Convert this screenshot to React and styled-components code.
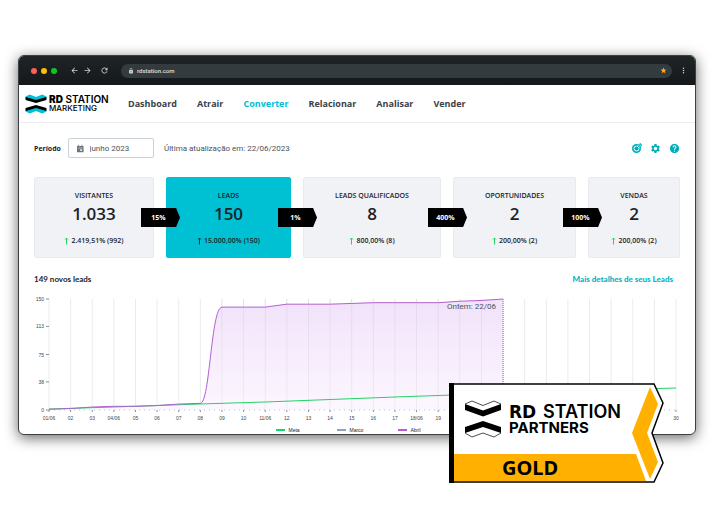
import React from "react";
import styled, { createGlobalStyle } from "styled-components";
import {
  MdArrowBack,
  MdArrowForward,
  MdHelp,
  MdLock,
  MdMoreVert,
  MdRefresh,
  MdSettings,
  MdStar,
} from "react-icons/md";

const GlobalStyle = createGlobalStyle`
  * {
    box-sizing: border-box;
  }
  body {
    margin: 0;
    background: #ffffff;
    color: #1d2228;
    font-family: "Open Sans", "Noto Sans", sans-serif;
  }
`;

const Page = styled.div`
  padding: 55px 19px 88px 18px;
`;

const Browser = styled.div`
  position: relative;
`;

const Window = styled.div`
  overflow: hidden;
  border: 1px solid #3c4042;
  border-radius: 6px;
  background: #ffffff;
  box-shadow: 0 3px 14px rgba(0, 0, 0, 0.6);
`;

const TitleBar = styled.div`
  display: flex;
  align-items: center;
  height: 29px;
  padding: 0 5px 0 12px;
  background: linear-gradient(#1f2427, #14181a);
`;

const Dots = styled.div`
  display: flex;
  gap: 4px;
  margin-right: 11px;
`;

const Dot = styled.span`
  width: 6px;
  height: 6px;
  border-radius: 50%;
  background: ${(props) => props.$color};
`;

const BarButton = styled.button`
  display: flex;
  justify-content: center;
  width: ${(props) => props.$width || 13}px;
  padding: 0;
  border: 0;
  background: none;
  color: #d5d8d9;
  font-size: 9px;
`;

const AddressBar = styled.div`
  display: flex;
  flex: 1;
  align-items: center;
  height: 14px;
  margin: 0 5px 0 7px;
  padding: 0 5px 0 7px;
  border-radius: 7px;
  background: #343b3e;
  color: #c9cccd;
  font-size: 6px;
`;

const Address = styled.input`
  flex: 1;
  min-width: 0;
  padding: 0 0 0 3px;
  border: 0;
  background: none;
  color: #dfe1e2;
  font: 500 6px "Roboto", sans-serif;
`;

const Star = styled(MdStar)`
  color: #ffab0f;
  font-size: 7px;
`;

const Header = styled.header`
  display: flex;
  align-items: center;
  height: 38px;
  padding: 0 6px;
  border-bottom: 1px solid #ececee;
`;

const Brand = styled.a`
  display: flex;
  align-items: center;
  gap: 2px;
  width: 103px;
  color: #000000;
  text-decoration: none;
`;

const BrandName = styled.span`
  font: 600 10px/9px "Inter", sans-serif;
  white-space: nowrap;
  b {
    font-weight: 900;
  }
  small {
    display: block;
    font-size: 8px;
    font-weight: 500;
    line-height: 8px;
  }
`;

const Nav = styled.nav`
  display: flex;
  gap: 20px;
`;

const NavLink = styled.a`
  color: ${(props) => (props.$active ? "#00bfd0" : "#3b4148")};
  font-size: 9px;
  font-weight: 700;
  text-decoration: none;
`;

const Content = styled.main`
  padding: 15px 15px 2px;
`;

const Filters = styled.div`
  display: flex;
  align-items: center;
  height: 20px;
  margin-bottom: 19px;
  font-size: 8px;
`;

const PeriodLabel = styled.label`
  font-size: 7px;
  font-weight: 700;
`;

const PeriodField = styled.div`
  display: flex;
  align-items: center;
  gap: 6px;
  width: 86px;
  height: 20px;
  margin: 0 10px 0 7px;
  padding: 0 7px 0 8px;
  border: 1px solid #c9d2d6;
  border-radius: 2px;
`;

const PeriodInput = styled.input`
  width: 100%;
  min-width: 0;
  padding: 0;
  border: 0;
  background: none;
  color: #4b5359;
  font: 8px "Roboto", sans-serif;
`;

const Updated = styled.span`
  color: #4b5359;
  font-family: "Roboto", sans-serif;
`;

const Tools = styled.div`
  display: flex;
  gap: 8px;
  margin-left: auto;
`;

const ToolButton = styled.button`
  display: flex;
  padding: 0;
  border: 0;
  background: none;
  color: #00adba;
  font-size: 11px;
`;

const Funnel = styled.div`
  display: grid;
  grid-template-columns: 120fr 125fr 138fr 123fr 92fr;
  gap: 12px;
`;

const Card = styled.section`
  position: relative;
  display: flex;
  flex-direction: column;
  align-items: center;
  height: 81px;
  padding-top: 13px;
  border: 1px solid ${(props) => (props.$active ? "#00c1d4" : "#e7ebee")};
  border-radius: 2px;
  background: ${(props) => (props.$active ? "#00c1d4" : "#f1f2f5")};
`;

const CardTitle = styled.h2`
  margin: 0;
  font-size: 7px;
  font-weight: 600;
  line-height: 10px;
`;

const CardValue = styled.strong`
  margin-bottom: 9px;
  font-size: 17px;
  font-weight: 600;
  line-height: 26px;
`;

const Growth = styled.span`
  display: flex;
  align-items: center;
  gap: 2px;
  font-size: 7px;
  font-weight: 600;
  line-height: 10px;
  svg {
    color: ${(props) => (props.$active ? "#14323a" : "#1fd65f")};
  }
`;

const Rate = styled.span`
  position: absolute;
  top: 30px;
  right: -27px;
  z-index: 1;
  width: 39px;
  height: 19px;
  padding-right: 4px;
  background: #000000;
  clip-path: polygon(0 0, 90% 0, 100% 50%, 90% 100%, 0 100%);
  color: #ffffff;
  font-size: 7px;
  font-weight: 700;
  line-height: 19px;
  text-align: center;
`;

const ChartHeader = styled.div`
  display: flex;
  align-items: center;
  justify-content: space-between;
  height: 14px;
  margin-top: 14px;
  padding-right: 7px;
`;

const ChartTitle = styled.h3`
  margin: 0;
  font: 700 8px "Lato", sans-serif;
`;

const DetailsLink = styled.a`
  color: #00b5c5;
  font: 900 8px "Lato", sans-serif;
  text-decoration: none;
`;

const Chart = styled.svg`
  display: block;
  width: 100%;
  margin-top: 9px;
  overflow: visible;
`;

const AxisText = styled.text`
  fill: #3f464c;
  font: 5px "Liberation Sans", sans-serif;
  text-anchor: ${(props) => props.$anchor || "middle"};
`;

const NoteText = styled.text`
  fill: #4b5359;
  font: 8px "Roboto", sans-serif;
  text-anchor: end;
`;

const Legend = styled.ul`
  display: flex;
  align-items: center;
  justify-content: center;
  height: 4px;
  margin: 5px 0 0;
  padding: 0 0 0 20px;
  overflow: hidden;
  font: 5px/4px "Liberation Sans", sans-serif;
  list-style: none;
`;

const LegendItem = styled.li`
  display: flex;
  align-items: center;
  gap: 4px;
  width: 61px;
  &::before {
    width: 9px;
    height: 2px;
    background: ${(props) => props.$color};
    content: "";
  }
`;

const Badge = styled.svg`
  position: absolute;
  right: 31px;
  bottom: -49px;
  width: 216px;
  height: 101px;
`;

const BadgeText = styled.text`
  font-family: ${(props) => props.$family || "Inter"}, sans-serif;
  font-size: ${(props) => props.$size}px;
  font-weight: ${(props) => props.$weight};
`;

const stages = [
  { title: "VISITANTES", value: "1.033", growth: "2.419,51% (992)", rate: "15%" },
  { title: "LEADS", value: "150", growth: "15.000,00% (150)", rate: "1%", active: true },
  { title: "LEADS QUALIFICADOS", value: "8", growth: "800,00% (8)", rate: "400%" },
  { title: "OPORTUNIDADES", value: "2", growth: "200,00% (2)", rate: "100%" },
  { title: "VENDAS", value: "2", growth: "200,00% (2)" },
];

const links = ["Dashboard", "Atrair", "Converter", "Relacionar", "Analisar", "Vender"];

const leads = [1, 2, 4, 5, 5, 6, 8, 9, 139, 139, 139, 143, 143, 143, 144, 145, 145, 145, 145, 147, 148, 150];

const days = Array.from({ length: 30 }, (_, i) => i + 1);

// the partner badge sits over days 20 to 29, so they get no label
const labelledDays = days.filter((day) => day < 20 || day === 30);

const xAt = (day) => 15 + ((day - 1) * 627) / 29;
const yAt = (value) => 115 - (value * 111) / 150;

// straight segments, except for the rounded jump on day 9
const leadsPath = leads
  .map((value, i) => {
    const x = xAt(i + 1);
    const y = yAt(value);
    if (i === 0) return `M${x} ${y}`;
    if (i === 8) return `C${x - 12} ${yAt(9)} ${x - 11} ${y} ${x} ${y}`;
    return `L${x} ${y}`;
  })
  .join("");

const dayLabel = (day) => {
  const text = String(day).padStart(2, "0");
  return day === 1 || (day + 3) % 7 === 0 ? `${text}/06` : text;
};

const GoalIcon = () => (
  <svg width="11" height="11" viewBox="0 0 22 22" fill="none" aria-hidden="true">
    <circle cx="11" cy="11" r="9" fill="currentColor" />
    <path d="M16 11a5 5 0 1 1-5-5" stroke="#ffffff" strokeWidth="2" />
    <path d="M13 9l8-7" stroke="#ffffff" strokeWidth="5" />
    <path d="M10 12l7-7M16 6V3l3-2v3h3l-2 3z" stroke="currentColor" strokeWidth="2" />
  </svg>
);

const CalendarIcon = () => (
  <svg width="8" height="9" viewBox="0 0 16 18" aria-hidden="true">
    <path d="M0 3h3V0h2v3h6V0h2v3h3v15H0z" fill="#6b757b" />
    <path d="M2 7h12v1.500H2zM8 11h4v4H8z" fill="#ffffff" />
  </svg>
);

const ArrowUp = () => (
  <svg width="5" height="8" viewBox="0 0 10 16" fill="none" aria-hidden="true">
    <path d="M5 15V2M2 5l3-3 3 3" stroke="currentColor" strokeWidth="2" />
  </svg>
);

const BrandMark = () => (
  <svg width="22" height="20" viewBox="0 0 42 40" preserveAspectRatio="none" aria-hidden="true">
    <path d="M1 5l8-4 12 5 12-5 8 4v4l-20 7L1 9z" fill="#00c1d4" />
    <path d="M1 6l20 6 20-6v6l-20 6-20-6z" />
    <path d="M1 35l8 4 12-5 12 5 8-4v-4l-20-7-20 7z" fill="#00c1d4" />
    <path d="M1 34l20-6 20 6v-6l-20-6-20 6z" />
  </svg>
);

const FunnelCard = ({ stage }) => {
  return (
    <Card $active={stage.active}>
      <CardTitle>{stage.title}</CardTitle>
      <CardValue>{stage.value}</CardValue>
      <Growth $active={stage.active}>
        <ArrowUp />
        {stage.growth}
      </Growth>
      {stage.rate && <Rate>{stage.rate}</Rate>}
    </Card>
  );
};

const LeadsChart = () => {
  return (
    <Chart viewBox="0 0 646 128" role="img" aria-label="149 novos leads">
      <defs>
        <linearGradient id="leadsFill" x1="0" y1="0" x2="0" y2="1">
          <stop offset="0" stopColor="#f1e2fa" />
          <stop offset="1" stopColor="#fcf7ff" />
        </linearGradient>
      </defs>
      {days.map((day) => (
        <path key={day} d={`M${xAt(day)} 4V115`} stroke="#ebebec" />
      ))}
      <path d={`${leadsPath}V115H15Z`} fill="url(#leadsFill)" />
      {days.slice(8, 21).map((day) => (
        <path key={day} d={`M${xAt(day)} 4V115`} stroke="#000000" strokeOpacity="0.050" />
      ))}
      <path d="M15 115H642" stroke="#b9bfcc" strokeDasharray="1 4" />
      {[0, 38, 75, 113, 150].map((value) => (
        <React.Fragment key={value}>
          <path d={`M12 ${yAt(value)}h3`} stroke="#8b9196" />
          <AxisText x="10" y={yAt(value) + 2} $anchor="end">
            {value}
          </AxisText>
        </React.Fragment>
      ))}
      {labelledDays.map((day) => (
        <React.Fragment key={day}>
          <path d={`M${xAt(day)} 115v2`} stroke="#8b9196" />
          <AxisText x={xAt(day)} y="125">
            {dayLabel(day)}
          </AxisText>
        </React.Fragment>
      ))}
      <path d={`M${xAt(22)} 4V115`} stroke="#7d7784" strokeDasharray="1 1" />
      <path
        d="M15 114L80 112 166 109 231 107 361 102 447 99 642 93"
        fill="none"
        stroke="#23d366"
      />
      <path d={leadsPath} fill="none" stroke="#b15fd0" />
      <NoteText x="462" y="14">
        Ontem: 22/06
      </NoteText>
    </Chart>
  );
};

const GoldBadge = () => (
  <Badge viewBox="0 0 216 101" role="img" aria-label="RD Station Partners Gold">
    <path d="M1 1H205L214 20 203 50 214 80 205 99H1z" fill="#ffffff" stroke="#000000" strokeWidth="1.500" />
    <path d="M0 0h5v100H0z" />
    <path d="M5 71H187L197 98H5z" fill="#ffb000" />
    <path d="M201 4L209 21 198 50 209 79 201 96 183 50z" fill="#ffb000" />
    <path d="M16 21l18 6.500 18-6.500v6l-18 6.500-18-6.500z" />
    <path d="M16 50l18-6 18 6v-6l-18-6-18 6z" />
    <path
      d="M16 21l7-3 11 4.500 11-4.500 7 3M16 50l7 4 11-4 11 4 7-4"
      fill="none"
      stroke="#000000"
      strokeWidth="0.700"
    />
    <BadgeText x="60" y="35" $size="17" $weight="700" $family="DejaVu Sans">
      RD
    </BadgeText>
    <BadgeText x="94" y="35" $size="18" $weight="600">
      STATION
    </BadgeText>
    <BadgeText x="60" y="50" $size="15" $weight="700">
      PARTNERS
    </BadgeText>
    <BadgeText x="53" y="92" $size="20" $weight="700" $family="Noto Sans">
      GOLD
    </BadgeText>
  </Badge>
);

const App = () => {
  return (
    <>
      <GlobalStyle />
      <Page>
        <Browser>
          <Window>
            <TitleBar>
              <Dots>
                <Dot $color="#ff5f57" />
                <Dot $color="#ffbd07" />
                <Dot $color="#0acb1c" />
              </Dots>
              <BarButton aria-label="Voltar">
                <MdArrowBack />
              </BarButton>
              <BarButton aria-label="Avançar">
                <MdArrowForward />
              </BarButton>
              <BarButton aria-label="Recarregar" $width={20}>
                <MdRefresh />
              </BarButton>
              <AddressBar>
                <MdLock />
                <Address aria-label="Endereço" defaultValue="rdstation.com" />
                <Star />
              </AddressBar>
              <BarButton aria-label="Menu">
                <MdMoreVert />
              </BarButton>
            </TitleBar>

            <Header>
              <Brand href="#">
                <BrandMark />
                <BrandName>
                  <b>RD</b> STATION
                  <small>MARKETING</small>
                </BrandName>
              </Brand>
              <Nav>
                {links.map((link) => (
                  <NavLink key={link} href="#" $active={link === "Converter"}>
                    {link}
                  </NavLink>
                ))}
              </Nav>
            </Header>

            <Content>
              <Filters>
                <PeriodLabel htmlFor="periodo">Período</PeriodLabel>
                <PeriodField>
                  <CalendarIcon />
                  <PeriodInput id="periodo" defaultValue="junho 2023" />
                </PeriodField>
                <Updated>Última atualização em: 22/06/2023</Updated>
                <Tools>
                  <ToolButton aria-label="Metas">
                    <GoalIcon />
                  </ToolButton>
                  <ToolButton aria-label="Configurações">
                    <MdSettings />
                  </ToolButton>
                  <ToolButton aria-label="Ajuda">
                    <MdHelp />
                  </ToolButton>
                </Tools>
              </Filters>

              <Funnel>
                {stages.map((stage) => (
                  <FunnelCard key={stage.title} stage={stage} />
                ))}
              </Funnel>

              <ChartHeader>
                <ChartTitle>149 novos leads</ChartTitle>
                <DetailsLink href="#">Mais detalhes de seus Leads</DetailsLink>
              </ChartHeader>
              <LeadsChart />
              <Legend>
                <LegendItem $color="#11d768">Meta</LegendItem>
                <LegendItem $color="#8fa5b5">Março</LegendItem>
                <LegendItem $color="#bd57d3">Abril</LegendItem>
              </Legend>
            </Content>
          </Window>
          <GoldBadge />
        </Browser>
      </Page>
    </>
  );
};

export default App;
